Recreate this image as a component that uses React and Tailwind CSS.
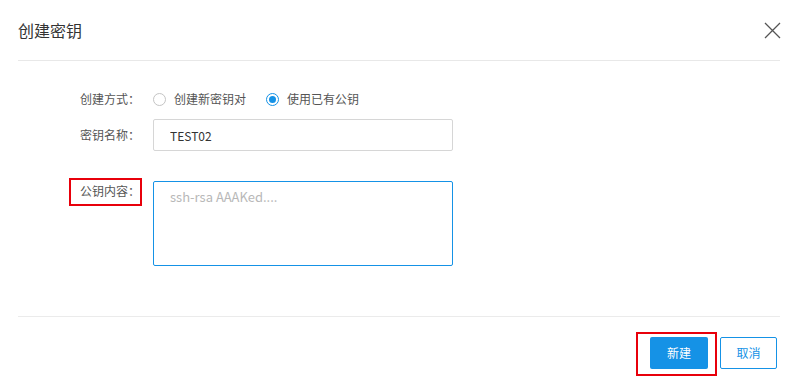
const blue = "#1592e6";

function Radio({ checked, label }) {
  return (
    <label className="flex items-center gap-[8px] cursor-pointer">
      {checked ? (
        <span className="w-[13px] h-[13px] rounded-full border border-[#1592e6] flex items-center justify-center">
          <span className="w-[7px] h-[7px] rounded-full bg-[#1592e6]" />
        </span>
      ) : (
        <span className="w-[13px] h-[13px] rounded-full border border-[#c4c4c4]" />
      )}
      <span className="text-[12px] text-[#555]">{label}</span>
    </label>
  );
}

export default function App() {
  return (
    <div
      className="w-[798px] h-[389px] bg-white flex flex-col"
      style={{ fontFamily: '"Noto Sans CJK SC", "Noto Sans", sans-serif' }}
    >
      {/* Header */}
      <div className="mx-[18px] h-[61px] border-b border-[#e8e8e8] flex items-center justify-between">
        <h1 className="text-[16px] text-[#333] pb-[1px]">创建密钥</h1>
        <button className="-mr-[1px]">
          <svg width="17" height="17" viewBox="0 0 17 17" className="block">
            <path d="M1 1 L16 16 M16 1 L1 16" stroke="#555" strokeWidth="1.3" fill="none" />
          </svg>
        </button>
      </div>

      {/* Body */}
      <div className="mx-[18px] h-[256px] border-b border-[#ebebeb] pt-[27px]">
        <div className="flex items-center h-[22px]">
          <div className="w-[122px] text-right text-[12px] text-[#555]">创建方式：</div>
          <div className="ml-[13px] flex items-center gap-[20px]">
            <Radio label="创建新密钥对" />
            <Radio checked label="使用已有公钥" />
          </div>
        </div>

        <div className="flex items-center mt-[9px]">
          <div className="w-[122px] text-right text-[12px] text-[#555]">密钥名称：</div>
          <input
            className="ml-[13px] w-[300px] h-[32px] border border-[#d6d6d6] rounded-[2px] px-[16px] text-[12px] text-[#333] outline-none"
            defaultValue="TEST02"
          />
        </div>

        <div className="flex items-start mt-[30px]">
          <div className="relative w-[122px] text-right text-[12px] text-[#555] pt-[1px]">
            公钥内容：
            <span className="absolute left-[51px] -right-[2px] -top-[3px] h-[28px] border-2 border-[#e8000b]" />
          </div>
          <textarea
            className="ml-[13px] w-[300px] h-[85px] border border-[#1592e6] rounded-[2px] px-[16px] pt-[5px] text-[13px] text-[#333] placeholder:text-[#b8b8b8] outline-none resize-none"
            placeholder="ssh-rsa AAAKed...."
          />
        </div>
      </div>

      {/* Footer */}
      <div className="flex justify-end items-start pt-[20px] pr-[21px] gap-[12px]">
        <div className="relative">
          <button
            className="w-[58px] h-[32px] rounded-[2px] text-white text-[12px]"
            style={{ backgroundColor: blue }}
          >
            新建
          </button>
          <span className="absolute -left-[14px] -right-[9px] -top-[5px] -bottom-[7px] border-2 border-[#e8000b]" />
        </div>
        <button className="w-[57px] h-[32px] rounded-[2px] border border-[#1592e6] text-[#1592e6] text-[12px] bg-white">
          取消
        </button>
      </div>
    </div>
  );
}
